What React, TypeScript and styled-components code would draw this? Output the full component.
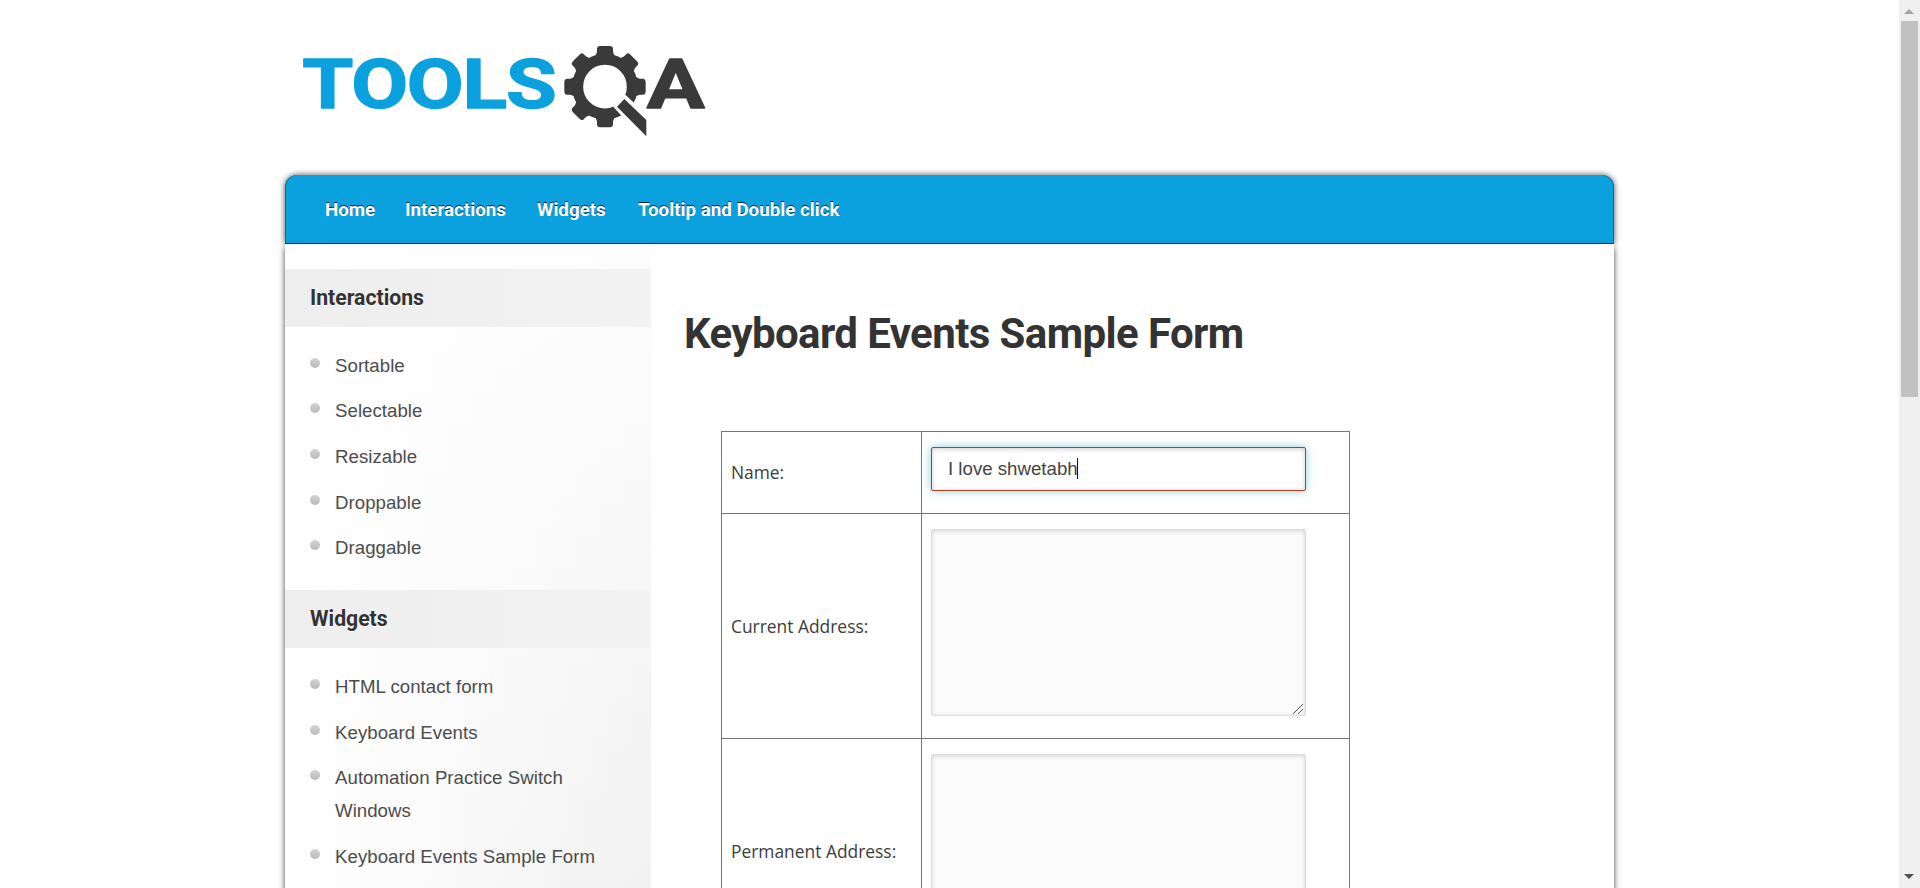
import React from "react";
import styled, { createGlobalStyle, css } from "styled-components";

const GlobalStyle = createGlobalStyle`
  * { box-sizing: border-box; }
  body { margin: 0; background: #fff; overflow: hidden; }
`;

const headingFont = css`
  font-family: Roboto, sans-serif;
  font-weight: 700;
`;

const Viewport = styled.div`
  display: flex;
  height: 888px;
  overflow: hidden;
  color: #333;
  font-family: "Liberation Sans", Arial, sans-serif;
`;

const Page = styled.div`
  flex: 1;
  display: flex;
  flex-direction: column;
  align-items: center;
`;

const Container = styled.div`
  width: 1329px;
  flex: 1;
  display: flex;
  flex-direction: column;
`;

const Header = styled.header`
  height: 175px;
  flex: none;
  padding: 30px 0 0 5px;
`;

const Nav = styled.nav`
  height: 69px;
  flex: none;
  display: flex;
  gap: 29.5px;
  padding-left: 40px;
  background: #0aa1de;
  border-bottom: 1px solid #17384a;
  border-radius: 12px 12px 0 0;
  box-shadow: 0 0 6px rgba(0, 0, 0, 0.7), inset 1px 0 0 rgba(0, 40, 70, 0.45),
    inset -1px 0 0 rgba(0, 40, 70, 0.45);
`;

const NavLink = styled.a<{ $width: number }>`
  ${headingFont}
  width: ${(p) => p.$width}px;
  font-size: 18.75px;
  line-height: 71px;
  color: #fff;
  white-space: nowrap;
  text-shadow: 0 -1px 0 rgba(0, 0, 0, 0.85);
`;

const Body = styled.div`
  flex: 1;
  display: flex;
  min-height: 0;
  background: #fff;
  box-shadow: 0 4px 6px rgba(0, 0, 0, 0.75);
`;

const Sidebar = styled.aside`
  width: 366px;
  flex: none;
  padding-top: 25px;
  overflow: hidden;
  background: linear-gradient(to bottom, rgba(255, 255, 255, 0.9), rgba(255, 255, 255, 0)),
    linear-gradient(to right, #fff 5%, #f0f0f0);
`;

const SectionTitle = styled.h3`
  ${headingFont}
  height: 58px;
  margin: 0;
  padding-left: 25px;
  font-size: 21.2px;
  line-height: 58px;
  background: linear-gradient(to right, #eeeeee, #f2f2f2);
  text-shadow: 0 1px 0 #fff;
`;

const LinkList = styled.ul`
  margin: 0;
  padding: 21.8px 25px 13.4px;
  list-style: none;
`;

const LinkItem = styled.li`
  display: flex;
  gap: 15px;
  margin-bottom: 12.6px;
  font-size: 18.67px;
  letter-spacing: 0.03px;
  line-height: 33px;
  color: #4c4c4c;
`;

const Bullet = styled.span`
  width: 10px;
  height: 10px;
  flex: none;
  margin-top: 9px;
  border-radius: 50%;
  background: linear-gradient(#d4d4d4, #b9b9b9);
`;

const Content = styled.main`
  flex: 1;
  padding: 59px 0 0 33px;
`;

const Title = styled.h1`
  ${headingFont}
  margin: 0;
  font-size: 42px;
  letter-spacing: -0.6px;
  line-height: 62px;
  white-space: nowrap;
`;

const FormTable = styled.div`
  width: 629px;
  margin: 66px 0 0 37px;
  border: 1px solid #777;
`;

const FormRow = styled.div<{ $height: number }>`
  display: flex;
  height: ${(p) => p.$height}px;
  border-bottom: 1px solid #777;
`;

const LabelCell = styled.div`
  width: 200px;
  flex: none;
  display: flex;
  align-items: center;
  padding: 0 0 1px 9px;
  border-right: 1px solid #777;
  font-family: "Open Sans", sans-serif;
  font-size: 17.4px;
  font-weight: 400;
  color: #3c3c3c;
`;

const FieldCell = styled.div`
  padding: 15px 0 0 9px;
`;

const TextField = styled.div`
  display: flex;
  align-items: center;
  width: 375px;
  height: 44px;
  padding: 0 0 0 16px;
  font-size: 18.67px;
  color: #444;
  background: #fff;
  border: 1px solid #b1401c;
  border-radius: 2px;
  box-shadow: 0 0 8px rgba(70, 165, 190, 0.6), inset 0 1px 5px rgba(0, 0, 0, 0.2);
`;

const Caret = styled.span`
  width: 1px;
  height: 21px;
  margin: 0 0 1px -1px;
  background: #111;
`;

const TextAreaBox = styled.div`
  position: relative;
  width: 375px;
`;

const TextArea = styled.textarea`
  display: block;
  width: 100%;
  height: 187px;
  padding: 10px 16px;
  background: #fbfbfb;
  border: 1px solid #dcdcdc;
  border-radius: 2px;
  outline: none;
  resize: none;
  box-shadow: inset 0 1px 4px rgba(0, 0, 0, 0.16);
`;

const Grip = styled.svg`
  position: absolute;
  right: 3px;
  bottom: 2px;
`;

const Scrollbar = styled.div`
  width: 21px;
  flex: none;
  display: flex;
  flex-direction: column;
  justify-content: space-between;
  align-items: center;
  padding-right: 1px;
  background: #f0f0f0;
`;

const ScrollTop = styled.div`
  display: flex;
  flex-direction: column;
  align-items: center;
  gap: 7px;
  padding-top: 9px;
`;

const Thumb = styled.div`
  width: 17px;
  height: 376px;
  background: #c1c1c1;
`;

const Arrow = styled.div<{ $down?: boolean }>`
  width: 0;
  height: 0;
  border: 5px solid transparent;
  ${(p) =>
    p.$down
      ? "border-top-color: #505050; border-bottom: 0; margin-bottom: 9px;"
      : "border-bottom-color: #a3a3a3; border-top: 0;"}
`;

const LogoText = styled.text`
  font-family: Roboto, sans-serif;
  font-weight: 700;
  font-size: 208px;
  stroke-width: 4px;
  stroke-linejoin: round;
`;

const teeth = [0, 45, 90, 135, 180, 225, 270, 315];

function Logo() {
  return (
    <svg width="430" height="120" viewBox="0 0 1290 360">
      <LogoText
        x="37"
        y="234"
        fill="#0aa1de"
        stroke="#0aa1de"
        letterSpacing="-3"
        textLength="760"
        lengthAdjust="spacingAndGlyphs"
      >
        TOOLS
      </LogoText>
      <g fill="#3a3a3a">
        <circle cx="945" cy="170" r="82" fill="none" stroke="#3a3a3a" strokeWidth="33" />
        {teeth.map((angle) => (
          <path
            key={angle}
            transform={`rotate(${angle} 945 170)`}
            d="M909 86 Q919 76 921 66 V55 Q922 48 930 48 H960 Q968 48 969 55 V66 Q971 76 981 86 Z"
          />
        ))}
      </g>
      <path d="M970 230 L1006 194 L1090 272 L1069 340 Z" fill="#fff" />
      <path d="M1003 207 L1069 270 V319 L981 230 Z" fill="#3a3a3a" />
      <LogoText
        x="1070"
        y="234"
        fill="#3a3a3a"
        stroke="#3a3a3a"
        textLength="174"
        lengthAdjust="spacingAndGlyphs"
      >
        A
      </LogoText>
    </svg>
  );
}

function AddressField() {
  return (
    <TextAreaBox>
      <TextArea />
      <Grip width="10" height="10" viewBox="0 0 10 10" stroke="#555" strokeWidth="1">
        <path d="M0 10 L10 0 M5 10 L10 5" />
      </Grip>
    </TextAreaBox>
  );
}

const navLinks = [
  { label: "Home", width: 50.5 },
  { label: "Interactions", width: 102.5 },
  { label: "Widgets", width: 71.5 },
  { label: "Tooltip and Double click", width: 202 },
];

const sections = [
  { title: "Interactions", links: ["Sortable", "Selectable", "Resizable", "Droppable", "Draggable"] },
  {
    title: "Widgets",
    links: [
      "HTML contact form",
      "Keyboard Events",
      "Automation Practice Switch Windows",
      "Keyboard Events Sample Form",
    ],
  },
];

export default function App() {
  return (
    <Viewport>
      <GlobalStyle />
      <Page>
        <Container>
          <Header>
            <Logo />
          </Header>
          <Nav>
            {navLinks.map((link) => (
              <NavLink key={link.label} $width={link.width}>
                {link.label}
              </NavLink>
            ))}
          </Nav>
          <Body>
            <Sidebar>
              {sections.map((section) => (
                <section key={section.title}>
                  <SectionTitle>{section.title}</SectionTitle>
                  <LinkList>
                    {section.links.map((label) => (
                      <LinkItem key={label}>
                        <Bullet />
                        <span>{label}</span>
                      </LinkItem>
                    ))}
                  </LinkList>
                </section>
              ))}
            </Sidebar>
            <Content>
              <Title>Keyboard Events Sample Form</Title>
              <FormTable>
                <FormRow $height={82}>
                  <LabelCell>Name:</LabelCell>
                  <FieldCell>
                    <TextField>
                      I love shwetabh
                      <Caret />
                    </TextField>
                  </FieldCell>
                </FormRow>
                <FormRow $height={225}>
                  <LabelCell>Current Address:</LabelCell>
                  <FieldCell>
                    <AddressField />
                  </FieldCell>
                </FormRow>
                <FormRow $height={225}>
                  <LabelCell>Permanent Address:</LabelCell>
                  <FieldCell>
                    <AddressField />
                  </FieldCell>
                </FormRow>
              </FormTable>
            </Content>
          </Body>
        </Container>
      </Page>
      <Scrollbar>
        <ScrollTop>
          <Arrow />
          <Thumb />
        </ScrollTop>
        <Arrow $down />
      </Scrollbar>
    </Viewport>
  );
}
